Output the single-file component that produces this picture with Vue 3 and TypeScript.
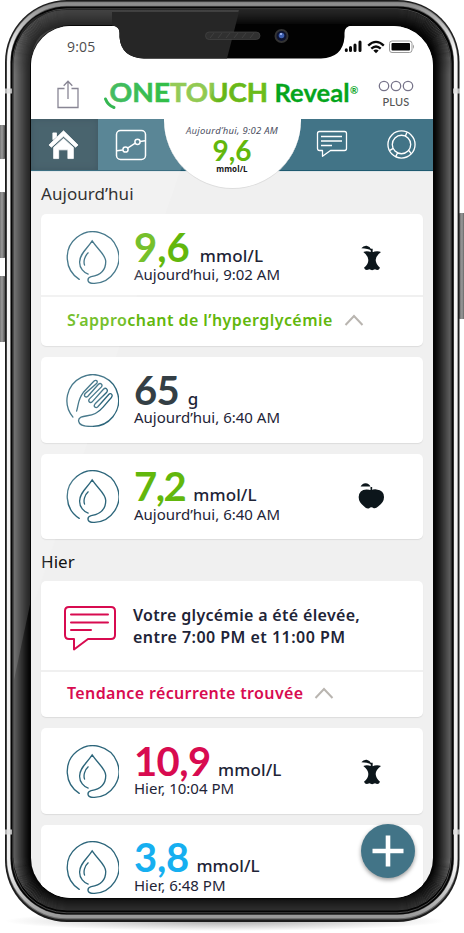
<script setup lang="ts">
type Tone = 'green' | 'slate' | 'pink' | 'blue'
type Mark = 'core' | 'apple' | ''

interface Reading {
  kind: 'drop' | 'fork'
  value: string
  unit: string
  time: string
  tone: Tone
  mark: Mark
  tracking: number
  gap: number
  note?: string
}

const today: Reading[] = [
  { kind: 'drop', value: '9,6', unit: 'mmol/L', time: 'Aujourd’hui, 9:02 AM', tone: 'green', mark: 'core', tracking: 0, gap: 10, note: 'S’approchant de l’hyperglycémie' },
  { kind: 'fork', value: '65', unit: 'g', time: 'Aujourd’hui, 6:40 AM', tone: 'slate', mark: '', tracking: -0.6, gap: 8.5 },
  { kind: 'drop', value: '7,2', unit: 'mmol/L', time: 'Aujourd’hui, 6:40 AM', tone: 'green', mark: 'apple', tracking: -1.5, gap: 8 },
]

const yesterday: Reading[] = [
  { kind: 'drop', value: '10,9', unit: 'mmol/L', time: 'Hier, 10:04 PM', tone: 'pink', mark: 'core', tracking: -0.6, gap: 7.5 },
  { kind: 'drop', value: '3,8', unit: 'mmol/L', time: 'Hier, 6:48 PM', tone: 'blue', mark: '', tracking: -0.3, gap: 7.5 },
]

const iconPaths = {
  drop: 'M40 146 A78 78 0 1 1 86 158 C62 160 62 142 76 138 C100 134 120 122 120 92 C120 72 96 56 79 30 C64 54 41 68 41 94 C41 112 54 126 67 130 M67 66 C56 76 52 92 56 103',
  fork: 'M21 130 A78 78 0 1 1 80 158 C58 159 40 154 38 142 C37 130 50 128 64 126 C88 124 100 114 112 100 L137 71 C143 63 135 55 129 62 L96 99 C90 105 81 98 88 90 L123 55 C128 47 120 39 113 46 L79 84 C73 90 65 82 71 75 L107 39 C112 32 104 25 98 31 L66 67 C60 73 52 66 58 59 L93 28 C97 21 90 16 84 22 L52 56 C36 76 38 92 32 112',
}

const core = 'M184 113 Q190 104 200 105 Q210 108 213 115 L212 119 Q205 114 184 113 Z M212 114 L218 114 L218 128 L212 128 Z M190 124 Q202 119 215 126 Q230 119 243 124 Q227 136 227 148 Q228 162 240 171 Q236 182 225 176 Q216 181 208 176 Q196 182 192 171 Q205 162 205 148 Q205 136 190 124 Z'
const apple = 'M186 136 Q190 127 201 126 Q212 127 216 136 Z M216 138 L221 138 L221 149 L216 149 Z M218 148 Q224 144 234 145 Q257 147 257 168 Q257 184 240 196 Q232 204 226 202 Q218 197 212 202 Q204 205 196 196 Q180 184 180 168 Q181 146 204 145 Q213 145 218 148 Z'

// Rings of the bezel, brightest at the outside edge.
const rings = Array.from({ length: 16 }, (_, i) => ({
  inset: 14 + i,
  radius: 53 - i,
  alpha: 0.4 * Math.pow(1 - i / 16, 1.2),
}))
</script>

<template>
  <main class="stage">
    <svg class="body" viewBox="0 0 464 933" aria-hidden="true">
      <defs>
        <linearGradient id="key" x1="0" x2="1"><stop offset="0" stop-color="#555" /><stop offset=".5" stop-color="#9a9a9a" /><stop offset="1" stop-color="#333" /></linearGradient>
        <linearGradient id="steel" x1="0" y1="0" x2="0" y2="1"><stop offset="0" stop-color="#8d8d8d" /><stop offset=".05" stop-color="#f6f6f6" /><stop offset=".95" stop-color="#eee" /><stop offset="1" stop-color="#999" /></linearGradient>
        <linearGradient id="ringfade" x1="0" y1="0" x2="0" y2="1"><stop offset="0" stop-color="#444" /><stop offset=".08" stop-color="#fff" /><stop offset=".92" stop-color="#fff" /><stop offset="1" stop-color="#333" /></linearGradient>
        <mask id="fade"><rect width="464" height="933" fill="url(#ringfade)" /></mask>
        <radialGradient id="floor"><stop offset="0" stop-color="#888" stop-opacity=".7" /><stop offset="1" stop-color="#888" stop-opacity="0" /></radialGradient>
      </defs>
      <ellipse cx="225" cy="921" rx="220" ry="10" fill="url(#floor)" />
      <rect x="-2" y="125" width="8" height="34" rx="2" fill="url(#key)" />
      <rect x="-2" y="192" width="8" height="66" rx="2" fill="url(#key)" />
      <rect x="-2" y="276" width="8" height="66" rx="2" fill="url(#key)" />
      <rect x="458" y="213" width="8" height="106" rx="2" fill="url(#key)" />
      <rect x="5" y="0" width="454.500" height="922" rx="62" fill="#1c1c1c" />
      <rect x="6.500" y="1.500" width="451.500" height="918" rx="60" fill="#666" />
      <rect x="8.700" y="4" width="447" height="912.500" rx="58" fill="none" stroke="url(#steel)" stroke-width="3.400" />
      <rect x="10.700" y="6.500" width="442.800" height="908" rx="56" fill="#050505" />
      <rect x="12.900" y="8.800" width="438.200" height="904" rx="54" fill="none" stroke="#666" stroke-width=".7" />
      <path d="M67 10 H239 L219 70 H31 V600 L14 680 V65 Q14 10 67 10 Z" fill="#262626" />
      <g mask="url(#fade)">
        <rect v-for="r in rings" :key="r.inset" :x="r.inset" :y="r.inset - 4" :width="464 - 2 * r.inset" :height="920 - 2 * (r.inset - 4)" :rx="r.radius" fill="none" stroke="#fff" :stroke-opacity="r.alpha" />
      </g>
      <path d="M5 91 H12 M453 91 H460 M5 832 H12 M453 832 H460" stroke="#ddd" stroke-width="5" opacity=".8" />
      <rect x="30" y="25" width="404" height="874" rx="41" fill="#060606" />
    </svg>

    <section class="screen">
      <div class="status">
        <span class="clock">9:05</span>
        <svg class="signals" viewBox="0 0 72 16" width="72" height="16" aria-hidden="true">
          <path d="M2.300 11.800v.6M6.500 9.500v3M11 7v5.500M16 4v8.500" stroke="#0a0a0a" stroke-width="3" stroke-linecap="round" transform="translate(0 -1)" />
          <g fill="none" stroke="#0a0a0a" stroke-width="2.300"><path d="M24.200 6.600Q32 -.8 39.800 6.600" /><path d="M27.300 9.700Q32 5.300 36.700 9.700" /></g>
          <path d="M29.300 11.600Q32 9.300 34.700 11.600L32 14.300Z" fill="#0a0a0a" />
          <rect x="45.500" y="2" width="22.500" height="11.500" rx="2.500" fill="#fff" stroke="#999" />
          <rect x="47.500" y="4" width="18.500" height="7.500" rx="1" fill="#050505" />
          <path d="M69 5.500Q71 7.700 69 10Z" fill="#999" />
        </svg>
      </div>

      <header class="brandbar">
        <svg class="share" viewBox="0 0 24 30" width="24" height="30" fill="none" stroke="#777485" stroke-width="1.300" aria-hidden="true">
          <path d="M8.500 9.500H2V28.500H22V9.500H15.500M12 20V2.200M7.700 6.800L12 2.200L16.300 6.800" />
        </svg>
        <svg class="logo" viewBox="0 0 258 34" width="258" height="34">
          <defs>
            <linearGradient id="one" x1="0" x2="1"><stop offset="0" stop-color="#2ab34d" /><stop offset="1" stop-color="#12b52a" /></linearGradient>
            <linearGradient id="touch" x1="0" x2="1"><stop offset="0" stop-color="#86c440" /><stop offset=".42" stop-color="#80c136" /><stop offset=".5" stop-color="#66b618" /><stop offset="1" stop-color="#6cbd1d" /></linearGradient>
          </defs>
          <path d="M1.500 22Q4 28.500 10 30.500" fill="none" stroke="#17ad38" stroke-width="3" stroke-linecap="round" />
          <text class="mark-one" x="5.500" y="25" textLength="60.500" lengthAdjust="spacingAndGlyphs" fill="url(#one)" stroke="url(#one)">ONE</text>
          <text class="mark-one" x="66" y="25" textLength="98" lengthAdjust="spacingAndGlyphs" fill="url(#touch)" stroke="url(#touch)">TOUCH</text>
          <text class="mark-two" x="170.500" y="25" textLength="75" lengthAdjust="spacingAndGlyphs">Reveal</text>
          <text class="mark-reg" x="246" y="17">®</text>
        </svg>
        <div class="more">
          <svg viewBox="0 0 36 12" width="36" height="12" fill="none" stroke="#77748a" stroke-width="1.300" aria-hidden="true"><circle cx="6" cy="6" r="4.700" /><circle cx="18" cy="6" r="4.700" /><circle cx="30" cy="6" r="4.700" /></svg>
          <span>PLUS</span>
        </div>
      </header>

      <nav class="tabs">
        <a class="tab home">
          <svg viewBox="0 0 32 32" width="31" height="31" aria-hidden="true"><path d="M5 4H8.800V8L5 11Z M1 16.500L16 1.800L31 16.500L28.500 18.800L16 7.500L3.500 18.800Z M5.800 19L16 9.700L26.200 19V30.500H20.500V21.500H11V30.500H5.800Z" fill="#fff" stroke="#fff" stroke-width=".8" stroke-linejoin="round" /></svg>
        </a>
        <a class="tab trends">
          <svg viewBox="0 0 32 32" width="32" height="32" fill="none" stroke="#fff" stroke-width="1.500" aria-hidden="true"><rect x="1.500" y="1.500" width="29" height="29" rx="4" /><circle cx="10.500" cy="20.500" r="2.600" /><circle cx="22.500" cy="12.800" r="2.600" /><path d="M2 21.700L7.800 21M12.600 19.100L20.300 14.200M25.100 12.500L30 11.800" /></svg>
        </a>
        <span class="tabgap"></span>
        <a class="tab chat">
          <svg viewBox="0 0 32 28" width="32" height="28" fill="none" stroke="#fff" stroke-width="1.300" stroke-linejoin="round" aria-hidden="true"><path d="M3.500 1.500H28.500Q30.500 1.500 30.500 3.500V18.500Q30.500 20.500 28.500 20.500H14.500L6.500 26.300V20.500H3.500Q1.500 20.500 1.500 18.500V3.500Q1.500 1.500 3.500 1.500ZM5 6.500H26M5 11H26M5 15.500H16" /></svg>
        </a>
        <a class="tab ring">
          <svg viewBox="0 0 32 32" width="31" height="31" fill="none" stroke="#fff" stroke-width="1.400" aria-hidden="true"><circle cx="16" cy="16" r="14" /><circle cx="16" cy="16" r="9.500" /><path d="M20 7.500L21.500 3.500M23.500 22L26 25.500M12 24.500L10 28.500M7.500 20L4 22" /></svg>
        </a>
        <div class="bubble">
          <em>Aujourd’hui, 9:02 AM</em>
          <strong>9,6</strong>
          <small>mmol/L</small>
        </div>
      </nav>

      <div class="feed">
        <h2>Aujourd’hui</h2>
        <article v-for="r in today" :key="r.value" class="card">
          <div class="reading">
            <svg class="glyph" viewBox="0 0 160 160" aria-hidden="true"><path :d="iconPaths[r.kind]" /></svg>
            <div class="figures">
              <p class="amount"><b :class="r.tone" :style="{ letterSpacing: r.tracking + 'px', marginRight: r.gap + 'px' }">{{ r.value }}</b><span>{{ r.unit }}</span></p>
              <p class="time">{{ r.time }}</p>
            </div>
            <svg v-if="r.mark === 'core'" class="meal" viewBox="180 100 66 84" width="22" height="28" aria-hidden="true"><path :d="core" /></svg>
            <svg v-if="r.mark === 'apple'" class="meal whole" viewBox="178 123 82 84" width="27" height="28" aria-hidden="true"><path :d="apple" /></svg>
          </div>
          <div v-if="r.note" class="note green">
            <span>{{ r.note }}</span>
            <svg viewBox="0 0 20 12" width="20" height="12" aria-hidden="true"><path d="M1.500 11L10 2L18.500 11" /></svg>
          </div>
        </article>

        <h2 class="hier">Hier</h2>
        <article class="card">
          <div class="message">
            <svg viewBox="0 0 54 48" width="54" height="48" aria-hidden="true"><path d="M6 2H48Q52 2 52 6V30Q52 34 48 34H25L11 44.500V34H6Q2 34 2 30V6Q2 2 6 2ZM8 9.500H45M8 17.500H45M8 25H28" /></svg>
            <p><span>Votre glycémie a été élevée,</span><br /><span class="hours">entre 7:00 PM et 11:00 PM</span></p>
          </div>
          <div class="note short pink">
            <span>Tendance récurrente trouvée</span>
            <svg viewBox="0 0 20 12" width="20" height="12" aria-hidden="true"><path d="M1.500 11L10 2L18.500 11" /></svg>
          </div>
        </article>
        <article v-for="r in yesterday" :key="r.value" class="card">
          <div class="reading">
            <svg class="glyph" viewBox="0 0 160 160" aria-hidden="true"><path :d="iconPaths[r.kind]" /></svg>
            <div class="figures">
              <p class="amount"><b :class="r.tone" :style="{ letterSpacing: r.tracking + 'px', marginRight: r.gap + 'px' }">{{ r.value }}</b><span>{{ r.unit }}</span></p>
              <p class="time">{{ r.time }}</p>
            </div>
            <svg v-if="r.mark === 'core'" class="meal" viewBox="180 100 66 84" width="22" height="28" aria-hidden="true"><path :d="core" /></svg>
          </div>
        </article>
      </div>

      <button class="add" aria-label="+"><svg viewBox="0 0 54 54" width="54" height="54" aria-hidden="true"><path d="M27 11.500V42.500M11.500 27H42.500" stroke="#fff" stroke-width="4.600" /></svg></button>
    </section>

    <svg class="glass" viewBox="0 0 464 933" aria-hidden="true">
      <path d="M70 26H239L180 172L120 345L35 600H31V65Q31 26 70 26Z" fill="#fff" opacity=".13" />
      <path d="M112 25.500Q119.500 26 119.500 33V37Q121 57.500 144 58.500H321Q343 57.500 344.500 37V33Q344.500 26 352 25.500V24H112Z" fill="#020202" />
      <path d="M112 25.500Q119.500 26 119.500 33V37Q121 57.500 144 58.500H227L239 12H112Z" fill="#262626" />
      <rect x="205.500" y="32" width="54.500" height="7.500" rx="3.700" fill="#303030" stroke="#454545" stroke-width=".7" />
      <path d="M210 38L214 33M218 38L222 33M226 38L230 33M234 38L238 33M242 38L246 33M250 38L254 33" stroke="#444" stroke-width=".8" />
      <circle cx="281.500" cy="36" r="7" fill="#333" /><circle cx="281.500" cy="36" r="5" fill="#0d1330" /><circle cx="281.500" cy="35.500" r="2.800" fill="#3e5fae" /><circle cx="281" cy="34" r="1" fill="#b8caff" />
    </svg>
  </main>
</template>

<style>
body { margin: 0; background: #fff; }
</style>

<style scoped>
* { box-sizing: border-box; }
p, h2 { margin: 0; }
svg { display: block; flex: none; }
.stage { position: relative; width: 464px; height: 933px; padding: 26px 31px 35px; overflow: hidden; background: #fff; font-family: "Noto Sans", "Open Sans", sans-serif; color: #1e2437; }
.body, .glass { position: absolute; top: 0; left: 0; width: 464px; height: 933px; pointer-events: none; }
.screen { position: relative; width: 402px; height: 872px; border-radius: 40px; overflow: hidden; background: #f0f0f0; }
.status { height: 40px; display: flex; justify-content: space-between; align-items: flex-start; padding: 12px 17px 0 36px; background: #fff; }
.clock { font: 400 14px/18px "Open Sans", sans-serif; color: #333; letter-spacing: .2px; }
.signals { margin-top: 1px; }
.brandbar { height: 53px; display: flex; align-items: flex-start; padding: 0 18px 0 25px; background: #fff; }
.share { margin-top: 13px; }
.logo { margin: 11px 0 0 24px; overflow: visible; }
.mark-one { font: 700 26px Lato, sans-serif; stroke-width: .6px; }
.mark-two { font: 700 25.500px Lato, sans-serif; fill: #05a51c; stroke: #05a51c; stroke-width: .3px; }
.mark-reg { font: 700 10px Lato, sans-serif; fill: #05a51c; }
.more { width: 38px; margin-left: 15px; padding-top: 14px; display: flex; flex-direction: column; align-items: center; color: #555; }
.more span { font-family: Lato, sans-serif; font-size: 11px; font-weight: 500; line-height: 14px; margin-top: 3px; letter-spacing: .2px; }
.tabs { position: relative; height: 52px; display: flex; background: #427487; border-bottom: 1px solid #1f5a70; box-shadow: 0 1px 0 #dfe5e8; }
.tab { display: flex; align-items: center; justify-content: center; width: 67px; }
.home { background: #2f4d59; box-shadow: inset 0 0 6px #24404b; padding-right: 2px; }
.trends { padding-right: 2px; }
.tabgap { width: 133px; }
.chat { width: 68px; padding-bottom: 1px; }
.ring { width: 67px; padding-left: 4px; }
.bubble { position: absolute; left: 132.500px; top: 0; width: 137px; height: 69.500px; border-radius: 0 0 69px 69px; background: #fff; border-bottom: 1px solid #ddd; display: flex; flex-direction: column; align-items: center; }
.bubble em { font-size: 9.500px; line-height: 12px; margin-top: 5.500px; color: #4a4d60; white-space: nowrap; letter-spacing: .25px; }
.bubble strong { font: 700 28px/26px Lato, sans-serif; color: #62b70c; }
.bubble small { font-size: 8px; line-height: 10px; font-weight: 700; color: #161616; margin-top: 1px; letter-spacing: .1px; }
.feed { display: flex; flex-direction: column; gap: 11px; padding: 0 10px; }
h2 { height: 32px; font-size: 17px; font-weight: 400; line-height: 46px; color: #111; letter-spacing: .05px; }
.hier { height: 20px; line-height: 23px; }
.card { background: #fff; border-radius: 5px; box-shadow: 0 1px 1px #dcdcdc; }
.reading { display: flex; height: 85.500px; padding: 0 41px 0 24.500px; }
.card:has(.note) .reading { height: 81px; }
.glyph { width: 53px; height: 53px; margin-top: 16.500px; fill: none; stroke: #2d667b; stroke-width: 4; stroke-linecap: round; }
.figures { flex: 1; padding: 17.500px 0 0 15.500px; }
.amount { display: flex; align-items: baseline; height: 30px; line-height: 31px; white-space: nowrap; }
.amount b { font-family: Lato, sans-serif; font-size: 40px; font-weight: 700; }
.amount span { font-size: 17px; font-weight: 500; letter-spacing: .1px; }
.time { font-size: 15px; line-height: 20px; margin-top: 2.500px; white-space: nowrap; }
.green { color: #62b70c; }
.slate { color: #343f45; }
.pink { color: #d80b50; }
.blue { color: #16aff0; }
.meal { margin-top: 30px; fill: #0c161b; }
.whole { margin-right: -3px; margin-top: 28px; }
.note { height: 51px; display: flex; align-items: center; padding: 0 0 4px 26px; gap: 11px; border-top: 2px solid #f0f0f0; font-size: 16px; font-weight: 600; white-space: nowrap; letter-spacing: .44px; }
.short { height: 47px; letter-spacing: .36px; }
.note svg { fill: none; stroke: #b9b5b0; stroke-width: 2; }
.message { height: 89px; display: flex; padding: 24px 0 0 22px; }
.message svg { fill: none; stroke: #d80b50; stroke-width: 2; stroke-linejoin: round; stroke-linecap: round; }
.message p { font-size: 16px; font-weight: 600; line-height: 21.500px; margin-left: 16px; white-space: nowrap; letter-spacing: .32px; }
.hours { letter-spacing: .46px; }
.add { position: absolute; left: 329.500px; top: 797.500px; width: 54px; height: 54px; padding: 0; border: 0; border-radius: 50%; background: #427487; box-shadow: 0 2px 4px #0006; }
</style>
